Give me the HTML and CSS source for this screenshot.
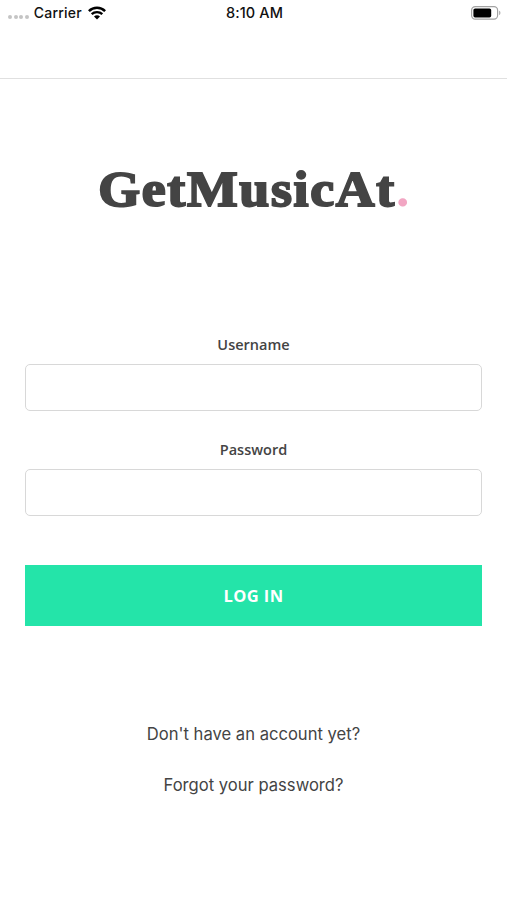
FILE: index.html
```html
<!DOCTYPE html>
<html lang="en">
  <head>
    <meta charset="UTF-8" />
    <meta name="viewport" content="width=device-width, initial-scale=1.0" />
    <title>GetMusicAt</title>
    <link rel="stylesheet" href="styles.css">
  </head>
  <body>
    <div class="status-bar">
      <div class="carrier">
        <span class="signal"><i></i><i></i><i></i><i></i></span>
        <span>Carrier</span>
        <svg class="wifi" viewBox="0 0 18 14" width="18" height="14" fill="none" stroke="#000">
          <path d="M.9 5.1C5.4.7 12.6.7 17.1 5.1" stroke-width="2.5" />
          <path d="M3.7 8.2C6.6 5.4 11.4 5.4 14.3 8.2" stroke-width="2.3" />
          <path d="M6 10.5C7.7 8.9 10.3 8.9 12 10.5L9 13.6Z" fill="#000" stroke="none" />
        </svg>
      </div>
      <div class="time">8:10 AM</div>
      <svg class="battery" viewBox="0 0 30 14" width="30" height="14">
        <rect x="0.6" y="0.6" width="26" height="12.6" rx="3.6" fill="#fff" stroke="#a3a3a3" stroke-width="1.2" />
        <rect x="2.4" y="2.4" width="17.8" height="9" rx="1.7" fill="#000" />
        <path d="M28.2 4.8C29.8 5.3 29.8 8.5 28.2 9Z" fill="#a3a3a3" />
      </svg>
    </div>
    <div class="nav-bar"></div>

    <h1 class="logo">GetMusicAt<span>.</span></h1>

    <form class="login-form">
      <label for="username">Username</label>
      <input type="text" id="username" />
      <label for="password">Password</label>
      <input type="password" id="password" />
      <button type="button">LOG IN</button>
    </form>

    <div class="links">
      <a>Don't have an account yet?</a>
      <a>Forgot your password?</a>
    </div>
  </body>
</html>
```
FILE: styles.css
```css
* {
  box-sizing: border-box;
}
body {
  margin: 0;
  height: 900px;
  overflow: hidden;
  background-color: #fff;
  color: #444;
  font-family: "Open Sans", "Noto Sans", sans-serif;
}
.status-bar {
  display: grid;
  grid-template-columns: 1fr auto 1fr;
  align-items: center;
  height: 26px;
  padding: 0 6px 0 8px;
  font-family: Inter, "Liberation Sans", sans-serif;
  font-size: 14px;
  font-weight: 500;
  line-height: 16px;
  color: #111;
}
.carrier {
  display: flex;
  align-items: center;
}
.carrier span,
.time {
  padding-bottom: 1px;
}
.time {
  font-size: 14.5px;
  letter-spacing: 0.1px;
}
.carrier .signal {
  display: flex;
  gap: 1.6px;
  margin: 9px 5px 0 0;
}
.signal i {
  width: 4px;
  height: 4px;
  border-radius: 50%;
  background-color: #c4c4c4;
}
.carrier span + span {
  letter-spacing: 0.2px;
}
.wifi {
  margin-left: 6px;
}
.battery {
  justify-self: end;
}
.nav-bar {
  height: 53px;
  border-bottom: 1px solid #e0e0e0;
}
.logo {
  width: fit-content;
  margin: 80px auto 0;
  padding-left: 2px;
  height: 60px;
  line-height: 60px;
  font-family: "Liberation Serif", serif;
  font-size: 50px;
  font-weight: bold;
  letter-spacing: 1.6px;
  color: #444;
  -webkit-text-stroke: 2px #444;
  transform: scaleX(1.075);
}
.logo span {
  color: #f2a6c3;
  -webkit-text-stroke: 0;
}
.login-form {
  display: flex;
  flex-direction: column;
  margin: 116px 25px 0;
}
label {
  height: 20px;
  margin-bottom: 9px;
  line-height: 20px;
  text-align: center;
  font-size: 14.5px;
  font-weight: 600;
}
input {
  height: 47px;
  margin-bottom: 29px;
  padding: 0 12px;
  border: 1px solid #d8d8d8;
  border-radius: 5px;
  background-color: #fff;
  font-size: 16px;
  outline: none;
}
button {
  height: 61px;
  margin-top: 20px;
  border: none;
  background-color: #24e4a9;
  color: #fff;
  font-family: inherit;
  font-size: 16.5px;
  font-weight: bold;
  letter-spacing: 0.4px;
}
.links {
  display: flex;
  flex-direction: column;
  align-items: center;
  gap: 27px;
  margin-top: 96px;
  font-family: Inter, "Liberation Sans", sans-serif;
  font-size: 16.6px;
  line-height: 24px;
}
```
